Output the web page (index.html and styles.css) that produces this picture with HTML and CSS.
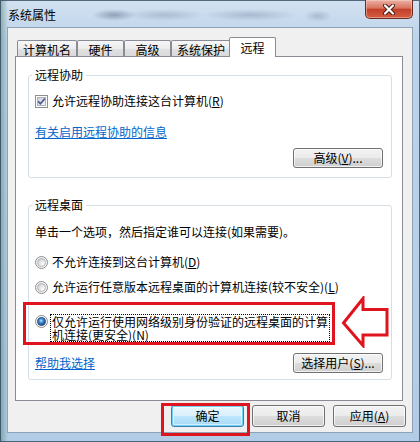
FILE: index.html
```html
<!DOCTYPE html>
<html lang="zh-CN">
<head>
  <meta charset="UTF-8" />
  <meta name="viewport" content="width=device-width, initial-scale=1.0" />
  <title>系统属性</title>
  <link rel="stylesheet" href="styles.css">
</head>
<body>
  <div class="window">
    <div class="titlebar">
      <span class="title">系统属性</span>
      <button class="close" aria-label="关闭">
        <svg width="14" height="11" viewBox="0 0 14 11">
          <path d="M3 1.5 L11 9.5 M11 1.5 L3 9.5" stroke="#4a1a14" stroke-width="4" stroke-linecap="round" fill="none"/>
          <path d="M3 1.5 L11 9.5 M11 1.5 L3 9.5" stroke="#fff" stroke-width="2.2" stroke-linecap="round" fill="none"/>
        </svg>
      </button>
    </div>

    <div class="client">
      <div class="tabs">
        <span class="tab">计算机名</span>
        <span class="tab">硬件</span>
        <span class="tab">高级</span>
        <span class="tab">系统保护</span>
        <span class="tab active">远程</span>
      </div>

      <div class="panel">
        <fieldset class="group assist">
          <legend>远程协助</legend>
          <label class="check-row">
            <svg class="checkbox" width="13" height="13" viewBox="0 0 13 13">
              <defs>
                <linearGradient id="cbFill" x1="0" y1="0" x2="1" y2="1">
                  <stop offset="0" stop-color="#cbcfd5"/>
                  <stop offset="1" stop-color="#f6f6f6"/>
                </linearGradient>
              </defs>
              <rect x="0.5" y="0.5" width="12" height="12" fill="#fff" stroke="#8e8f8f"/>
              <rect x="2.5" y="2.5" width="8" height="8" fill="url(#cbFill)" stroke="#aeb3b9"/>
              <path d="M3.2 6.4 L5.4 8.8 L9.8 3.6" stroke="#4a5f97" stroke-width="1.7" fill="none"/>
            </svg>
            <span>允许远程协助连接这台计算机(<u>R</u>)</span>
          </label>
          <a class="link" href="#">有关启用远程协助的信息</a>
          <div class="btn-row">
            <button class="btn wide">高级(<u>V</u>)...</button>
          </div>
        </fieldset>

        <fieldset class="group desktop">
          <legend>远程桌面</legend>
          <p class="hint">单击一个选项，然后指定谁可以连接(如果需要)。</p>

          <label class="radio-row first">
            <svg class="radio" width="13" height="13" viewBox="0 0 13 13">
              <defs>
                <radialGradient id="rbFill" cx="0.7" cy="0.7" r="0.8">
                  <stop offset="0" stop-color="#ffffff"/>
                  <stop offset="1" stop-color="#c9ccd1"/>
                </radialGradient>
              </defs>
              <circle cx="6.5" cy="6.5" r="6" fill="#f4f4f4" stroke="#8e8f8f"/>
              <circle cx="6.5" cy="6.5" r="4" fill="url(#rbFill)" stroke="#b4b8bd"/>
            </svg>
            <span>不允许连接到这台计算机(<u>D</u>)</span>
          </label>

          <label class="radio-row">
            <svg class="radio" width="13" height="13" viewBox="0 0 13 13">
              <circle cx="6.5" cy="6.5" r="6" fill="#f4f4f4" stroke="#8e8f8f"/>
              <circle cx="6.5" cy="6.5" r="4" fill="url(#rbFill)" stroke="#b4b8bd"/>
            </svg>
            <span>允许运行任意版本远程桌面的计算机连接(较不安全)(<u>L</u>)</span>
          </label>

          <label class="radio-row multi">
            <svg class="radio" width="13" height="13" viewBox="0 0 13 13">
              <defs>
                <radialGradient id="rbDot" cx="0.45" cy="0.4" r="0.6">
                  <stop offset="0" stop-color="#b9e4fb"/>
                  <stop offset="0.45" stop-color="#3f86cf"/>
                  <stop offset="1" stop-color="#18407f"/>
                </radialGradient>
              </defs>
              <circle cx="6.5" cy="6.5" r="6" fill="#f4f4f4" stroke="#8e8f8f"/>
              <circle cx="6.5" cy="6.5" r="4" fill="url(#rbDot)" stroke="#2c5a91"/>
            </svg>
            <span class="focus-label">仅允许运行使用网络级别身份验证的远程桌面的计算机连接(更安全)(N)</span>
          </label>

          <div class="row-between">
            <a class="link inline" href="#">帮助我选择</a>
            <button class="btn wide">选择用户(<u>S</u>)...</button>
          </div>
        </fieldset>
      </div>

      <div class="dialog-buttons">
        <button class="btn default">确定</button>
        <button class="btn">取消</button>
        <button class="btn">应用(<u>A</u>)</button>
      </div>
    </div>

    <!-- annotations drawn over the dialog -->
    <div class="mark mark-option"></div>
    <div class="mark mark-ok"></div>
    <svg class="arrow" width="48" height="52" viewBox="0 0 48 52">
      <path d="M2.5 27 L22 2.5 L22 13.5 L46 13.5 L46 39 L22 39 L22 49.5 Z" fill="#fff" stroke="#e0141e" stroke-width="3"/>
    </svg>
  </div>
</body>
</html>
```

FILE: styles.css
```css
* { box-sizing: border-box; }
body {
  margin: 0;
  width: 420px;
  height: 442px;
  overflow: hidden;
  font: 12px/16px "Noto Sans CJK SC", "Noto Sans", sans-serif;
  color: #000;
}
.window {
  position: relative;
  width: 420px;
  height: 442px;
  box-shadow: inset 0 0 0 1px rgba(40,64,88,0.75);
  background:
    radial-gradient(ellipse 22px 6px at 114px 15px, rgba(70,90,120,0.45), transparent),
    radial-gradient(ellipse 40px 6px at 165px 15px, rgba(90,110,140,0.28), transparent),
    radial-gradient(ellipse 48px 6px at 250px 15px, rgba(90,110,140,0.3), transparent),
    radial-gradient(ellipse 14px 6px at 318px 16px, rgba(90,110,140,0.3), transparent),
    linear-gradient(to right, rgba(70,125,105,0.5), rgba(70,125,105,0) 8px),
    linear-gradient(#d2e1f0, #bdd3ea 40px, #b3cce6);
}
.titlebar {
  height: 27px;
  display: flex;
  justify-content: space-between;
  align-items: flex-start;
}
.title { margin: 7px 0 0 8px; }
.close {
  width: 48px;
  height: 19px;
  margin-right: 7px;
  padding: 0;
  border: 1px solid #6b2b22;
  border-top: none;
  border-radius: 0 0 5px 5px;
  background: linear-gradient(#eab1a4, #d9735f 45%, #c4402a 52%, #d45d42);
  box-shadow: inset 0 0 0 1px rgba(255,220,210,0.45);
  display: flex;
  align-items: center;
  justify-content: center;
}
.client {
  margin-left: 7px;
  width: 406px;
  height: 406px;
  background: #f0f0f0;
  border: 1px solid #8fa3b6;
  padding: 9px 0 0 7px;
}
.tabs {
  display: flex;
  align-items: flex-end;
  height: 19px;
  padding-left: 2px;
}
.tab {
  height: 16px;
  min-width: 47px;
  padding: 1px 5px 0;
  text-align: center;
  line-height: 15px;
  border: 1px solid #898c95;
  border-bottom: none;
  border-radius: 2px 2px 0 0;
  background: linear-gradient(#f7f7f7, #ececec 50%, #e1e1e1 51%, #dadada);
}
.tab.active {
  height: 20px;
  margin: 0 -2px -1px;
  line-height: 17px;
  background: #fff;
  position: relative;
  z-index: 1;
}
.panel {
  width: 388px;
  height: 345px;
  background: #fff;
  border: 1px solid #898c95;
}
.group {
  margin: 10px 10px 0 12px;
  padding: 0 8px 9px 6px;
  border: 1px solid #d5dfe5;
  border-radius: 3px;
  min-width: 0;
}
.group legend { padding: 0 3px; margin-left: -3px; line-height: 16px; }
.group.desktop { margin-top: 19px; padding-bottom: 6px; }
.check-row {
  display: flex;
  align-items: center;
  gap: 4px;
  height: 16px;
  margin-top: 10px;
}
.link {
  display: block;
  width: max-content;
  margin-top: 15px;
  color: #0066cc;
  text-decoration: underline;
}
.link.inline { margin-top: 0; }
.btn-row { display: flex; justify-content: flex-end; margin-top: 8px; }
.btn {
  font: inherit;
  height: 20px;
  padding: 0 6px;
  color: #000;
  border: 1px solid #707070;
  border-radius: 3px;
  background: linear-gradient(#f2f2f2, #ebebeb 50%, #dddddd 50%, #cfcfcf);
  box-shadow: inset 0 0 0 1px rgba(255,255,255,0.7);
}
.btn.wide { width: 90px; }
.btn.default {
  border-color: #3c7fb1;
  background: linear-gradient(#eaf6fd, #d9f0fc 50%, #bee6fd 50%, #a7d9f5);
  box-shadow: inset 0 0 0 1px #6fd3f7, inset 0 0 0 2px rgba(255,255,255,0.5);
}
.hint { margin: 11px 0 0; }
.radio-row {
  display: flex;
  align-items: center;
  gap: 4px;
  height: 16px;
  margin-top: 9px;
}
.radio-row.first { margin-top: 14px; }
.radio-row.multi {
  align-items: flex-start;
  height: auto;
  gap: 3px;
  margin-top: 20px;
  line-height: 13px;
}
.focus-label {
  width: 278px;
  padding: 0 1px;
  outline: 1px dotted #000;
}
.row-between {
  display: flex;
  justify-content: space-between;
  align-items: center;
  margin-top: 12px;
}
.dialog-buttons {
  display: flex;
  justify-content: flex-end;
  gap: 8px;
  margin-top: 4px;
  padding-right: 6px;
}
.dialog-buttons .btn { width: 73px; height: 22px; }
.mark {
  position: absolute;
  border: 3px solid #e0141e;
}
.mark-option { left: 23px; top: 302px; width: 312px; height: 43px; }
.mark-ok { left: 161px; top: 403px; width: 89px; height: 33px; }
.arrow { position: absolute; left: 341px; top: 296px; }
```
